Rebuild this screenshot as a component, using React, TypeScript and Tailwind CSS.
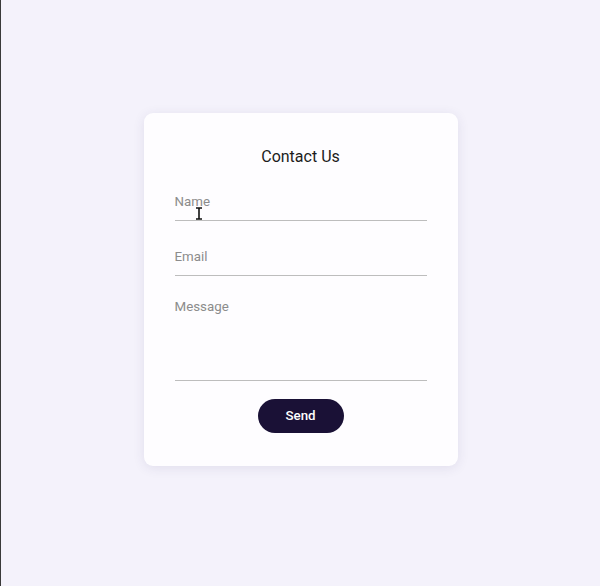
import React from "react";

export default function App() {
  return (
    <div
      className="min-h-screen w-full bg-[#f4f2fb] border-l border-[#3a3a3a] flex justify-center pt-[113px]"
      style={{ fontFamily: "Roboto, 'Liberation Sans', sans-serif" }}
    >
      <div className="relative w-[314px] h-[353px] bg-[#fefdff] rounded-[9px] shadow-[0_2px_12px_rgba(60,50,110,0.10)] px-[31px] pt-[32px] flex flex-col">
        <h1 className="text-center text-[16px] leading-[24px] text-[#1c1c1c] font-normal">Contact Us</h1>
        <input
          type="text"
          placeholder="Name"
          className="mt-[21px] w-full bg-transparent outline-none border-b border-[#bdbdbd] pt-[2px] pb-[8px] text-[13.33px] leading-[20px] placeholder:text-[#8c8c8c] text-[#333]"
        />
        <input
          type="email"
          placeholder="Email"
          className="mt-[24px] w-full bg-transparent outline-none border-b border-[#bdbdbd] pt-[2px] pb-[8px] text-[13.33px] leading-[20px] placeholder:text-[#8c8c8c] text-[#333]"
        />
        <textarea
          placeholder="Message"
          className="mt-[19px] w-full h-[86px] resize-none bg-transparent outline-none border-b border-[#bdbdbd] pt-[2px] text-[13.33px] leading-[20px] placeholder:text-[#8c8c8c] text-[#333]"
        />
        <div className="flex justify-center mt-[18px]">
          <button className="w-[86px] h-[34px] rounded-full bg-[#1a1136] text-white text-[13.33px] font-medium">
            Send
          </button>
        </div>
        <svg
          className="absolute left-[51px] top-[94px]"
          width="8"
          height="13"
          viewBox="0 0 8 13"
        >
          <path d="M1 1h6M4 1v11M1 12h6" stroke="#111" strokeWidth="1.6" fill="none" />
        </svg>
      </div>
    </div>
  );
}
